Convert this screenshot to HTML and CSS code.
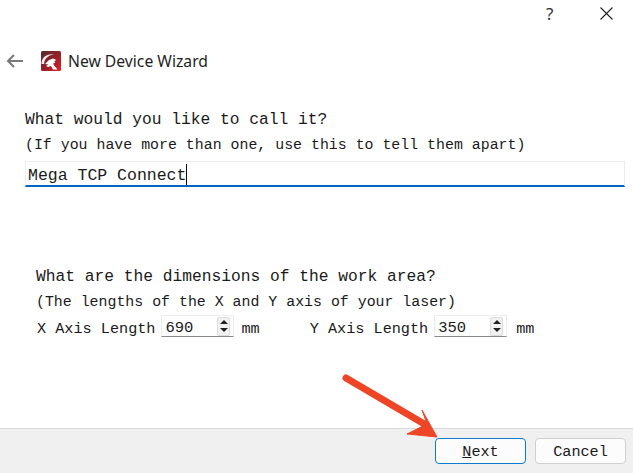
FILE: index.html
```html
<!DOCTYPE html>
<html lang="en">
<head>
<meta charset="utf-8">
<title>New Device Wizard</title>
<link rel="stylesheet" href="styles.css">
</head>
<body>
<div class="window">
  <div class="titlebar">
    <span class="help">?</span>
    <svg class="close" width="13" height="13" viewBox="0 0 13 13"><path d="M.5.5l12 12M12.500.5l-12 12" fill="none" stroke="#222" stroke-width="1.1"/></svg>
  </div>
  <header class="wizard-head">
    <svg class="back" width="18" height="14" viewBox="0 0 18 14"><path d="M17 7H2M8 1 2 7l6 6" fill="none" stroke="#7a7a7a" stroke-width="2"/></svg>
    <svg class="logo" width="20" height="20" viewBox="0 0 20 20">
      <defs><linearGradient id="lg" x1="0" y1="0" x2="1" y2="1"><stop offset="0" stop-color="#4f2f30"/><stop offset=".55" stop-color="#9a1f28"/><stop offset="1" stop-color="#e8202c"/></linearGradient></defs>
      <rect width="20" height="20" rx="1.500" fill="url(#lg)"/>
      <path d="M0.500 13C0.500 6 6 2.500 13 3.500 8 4 3.500 7 3 13Z" fill="#f4eaea"/>
      <path d="M4 13l4-4 4-1.500 3.500 1.500-2 1 .5 2-2 .5 1.500 2.500 3 3.500H12l-2-3.500-3 1-2-1 2.500-1.500L4 13Z" fill="#fff"/>
    </svg>
    <span class="wizard-title">New Device Wizard</span>
  </header>
  <main class="content">
    <section class="name-block">
      <p class="q">What would you like to call it?</p>
      <p class="hint">(If you have more than one, use this to tell them apart)</p>
      <div class="name-input"><span>Mega TCP Connect</span><i class="caret"></i></div>
    </section>
    <section class="dim-block">
      <p class="q">What are the dimensions of the work area?</p>
      <p class="hint">(The lengths of the X and Y axis of your laser)</p>
      <div class="dim-row">
        <span class="axis">X Axis Length</span>
        <div class="spin"><span class="val">690</span><span class="arrows"><b class="up"></b><b class="down"></b></span></div>
        <span class="unit">mm</span>
        <span class="axis y">Y Axis Length</span>
        <div class="spin"><span class="val">350</span><span class="arrows"><b class="up"></b><b class="down"></b></span></div>
        <span class="unit wide">mm</span>
      </div>
    </section>
  </main>
  <footer class="footer">
    <button class="btn primary"><u>N</u>ext</button>
    <button class="btn">Cancel</button>
  </footer>
  <svg class="pointer" width="110" height="80" viewBox="0 0 110 80">
    <path d="M6 7 86 54" fill="none" stroke="#ee4527" stroke-width="7" stroke-linecap="round"/>
    <path d="M97 66 67 63 87 53 82 39Z" fill="#ee4527" stroke="#ee4527" stroke-linejoin="round"/>
  </svg>
</div>
</body>
</html>
```
FILE: styles.css
```css
* { box-sizing: border-box; }
html, body { margin: 0; padding: 0; }
body { background: #fff; color: #1a1a1a; overflow: hidden; }
.window { position: relative; width: 633px; height: 473px; display: flex; flex-direction: column; background: #fff; }
p { margin: 0; }

.titlebar { height: 46px; display: flex; align-items: flex-start; justify-content: flex-end; padding: 7px 20px 0 0; gap: 44px; }
.help { font: 17px/15px "Noto Sans", sans-serif; color: #333; width: 10px; margin-top: -1px; }

.wizard-head { height: 30px; display: flex; align-items: center; padding-left: 6px; }
.logo { margin-left: 17px; }
.wizard-title { margin-left: 7px; font: 15.700px "Noto Sans", sans-serif; color: #1f1f1f; }

.content { flex: 1; font-family: "Liberation Mono", monospace; color: #1a1a1a; }
.q { font-size: 16.250px; line-height: 22px; }
.hint { font-size: 14.900px; line-height: 22px; }

.name-block { padding: 0 8px 0 25px; margin-top: 33px; }
.name-block .hint { margin-top: 3px; }
.name-input { height: 26px; margin-top: 5px; border: 1px solid #ececec; border-bottom: 2px solid #0067c0; display: flex; align-items: center; padding: 3px 0 0 2px; font-size: 16.500px; }
.caret { width: 1px; height: 21px; background: #111; margin-top: -2px; }

.dim-block { padding-left: 36px; margin-top: 79px; }
.dim-block .hint { margin-top: 3px; }
.dim-row { display: flex; align-items: center; margin-top: 2px; height: 22px; font-size: 15.200px; }
.axis { margin-left: 1px; padding-top: 6px; }
.axis.y { margin-left: 50px; }
.spin { width: 73px; height: 22px; margin-left: 6px; border: 1px solid #ececec; border-bottom: 1px solid #8a8a8a; display: flex; align-items: center; justify-content: space-between; padding: 0 3px; }
.val { font-size: 15.500px; padding-top: 4px; }
.arrows { width: 13px; height: 19px; display: flex; flex-direction: column; align-items: center; justify-content: space-around; background: #f1f1f1; border: 1px solid #dcdcdc; border-radius: 2px; }
.arrows b { width: 0; height: 0; border-left: 4px solid transparent; border-right: 4px solid transparent; }
.up { border-bottom: 4px solid #222; }
.down { border-top: 4px solid #222; }
.unit { margin-left: 7px; padding-top: 6px; }
.unit.wide { margin-left: 9px; }

.footer { height: 45px; background: #f0f0f0; border-top: 1px solid #d9d9d9; display: flex; justify-content: flex-end; align-items: flex-start; gap: 9px; padding: 9px 7px 0 0; }
.btn { width: 91px; height: 26px; padding: 2px 0 0; background: #fcfcfc; border: 1px solid #d0d0d0; border-radius: 4px; font: 15.200px "Liberation Mono", monospace; color: #1a1a1a; }
.btn.primary { border-color: #0f7ad1; }

.pointer { position: absolute; left: 340px; top: 371px; }
```
